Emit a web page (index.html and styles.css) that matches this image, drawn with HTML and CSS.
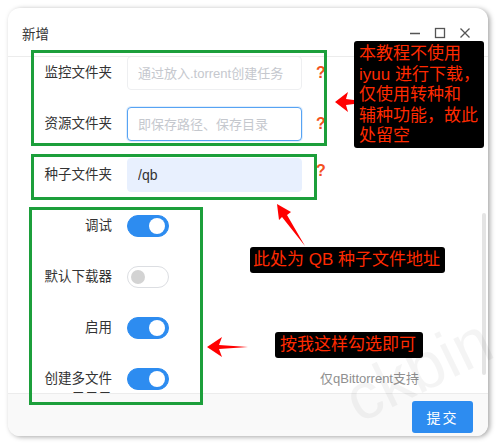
FILE: index.html
```html
<!doctype html>
<html lang="zh">
<head>
    <meta charset="UTF-8">
    <title>新增</title>
    <link rel="stylesheet" href="styles.css">
</head>
<body>
<div class="dialog">
    <div class="dlg-head">
        <span class="dlg-title">新增</span>
        <div class="win-ctrls">
            <svg width="12" height="12" viewBox="0 0 12 12"><path d="M1 6.5H11" stroke="#555" stroke-width="1.3"/></svg>
            <svg width="12" height="12" viewBox="0 0 12 12"><rect x="1.5" y="1.5" width="9" height="9" fill="none" stroke="#555" stroke-width="1.3"/></svg>
            <svg width="12" height="12" viewBox="0 0 12 12"><path d="M1.5 1.5L10.5 10.5M10.5 1.5L1.5 10.5" stroke="#555" stroke-width="1.3"/></svg>
        </div>
    </div>
    <div class="dlg-body">
        <div class="form">
            <div class="form-item">
                <label class="form-label">监控文件夹</label>
                <input class="ipt ipt-light" type="text" placeholder="通过放入.torrent创建任务">
                <span class="help">?</span>
            </div>
            <div class="form-item">
                <label class="form-label">资源文件夹</label>
                <input class="ipt ipt-focus" type="text" placeholder="即保存路径、保存目录">
                <span class="help">?</span>
            </div>
            <div class="form-item">
                <label class="form-label">种子文件夹</label>
                <input class="ipt ipt-fill" type="text" value="/qb">
                <span class="help help-up">?</span>
            </div>
            <div class="form-item">
                <label class="form-label">调试</label>
                <span class="switch on"><i></i></span>
            </div>
            <div class="form-item">
                <label class="form-label">默认下载器</label>
                <span class="switch"><i></i></span>
            </div>
            <div class="form-item">
                <label class="form-label">启用</label>
                <span class="switch on"><i></i></span>
            </div>
            <div class="form-item">
                <label class="form-label">创建多文件子目录</label>
                <span class="switch on"><i></i></span>
                <span class="hint">仅qBittorrent支持</span>
            </div>
        </div>
        <div class="scroll-thumb"></div>
    </div>
    <div class="dlg-foot">
        <button class="btn-primary">提交</button>
    </div>
</div>

<div class="notes">
    <div class="gbox gbox-1"></div>
    <div class="gbox gbox-2"></div>
    <div class="gbox gbox-3"></div>
    <div class="tip tip-1">本教程不使用<br>iyuu 进行下载，<br>仅使用转种和<br>辅种功能，故此<br>处留空</div>
    <div class="tip tip-2">此处为 QB 种子文件地址</div>
    <div class="tip tip-3">按我这样勾选即可</div>
    <svg class="arrows" width="500" height="445" viewBox="0 0 500 445">
        <polygon points="335,102 348,92 346,99 354,100 354,104 346,105 348,112" fill="#ff0000"/>
        <polygon points="277,204 291,212 287,215 305,246 282,217 279,220" fill="#ff0000"/>
        <polygon points="207,347 222,337 219,345 248,347 219,349 222,357" fill="#ff0000"/>
    </svg>
    <div class="watermark">ckbin</div>
</div>
</body>
</html>
```

FILE: styles.css
```css
*{
    margin: 0;
    padding: 0;
    box-sizing: border-box;
}
html,body{
    width: 100%;
    height: 100%;
    background: #fff;
    overflow: hidden;
}
body{
    font-family: "Liberation Sans", "Noto Sans CJK SC", sans-serif;
    color: #333;
}
.dialog{
    margin: 8px 0 0 8px;
    width: 480px;
    height: 428px;
    border-radius: 12px;
    background: #fff;
    box-shadow: 2px 1px 5px rgba(0,0,0,0.35);
    overflow: hidden;
    display: flex;
    flex-direction: column;
}
.dlg-head{
    height: 49px;
    flex-shrink: 0;
    display: flex;
    align-items: center;
    justify-content: space-between;
    padding: 0 17px 0 14px;
    border-bottom: 1px solid #ececec;
}
.dlg-title{
    font-size: 13.5px;
    color: #333;
    margin-top: 2px;
}
.win-ctrls{
    display: flex;
    gap: 13px;
    margin-top: 1px;
}
.dlg-body{
    position: relative;
    flex-grow: 1;
    overflow: hidden;
}
.form{
    margin-top: -1px;
    padding-left: 16px;
}
.form-item{
    display: flex;
    align-items: flex-start;
    height: 34px;
    margin-bottom: 17px;
}
.form-label{
    width: 103px;
    flex-shrink: 0;
    padding: 7px 15px 0 16px;
    font-size: 13.5px;
    line-height: 20px;
    text-align: right;
    color: #333;
}
.ipt{
    width: 175px;
    height: 34px;
    border: 1px solid #dcdee2;
    border-radius: 4px;
    padding: 0 10px;
    font-family: "Liberation Sans", "Noto Sans CJK SC", sans-serif;
    font-size: 13px;
    color: #333;
    background: #fff;
    outline: none;
}
.ipt::placeholder{
    color: #c5c8ce;
}
.ipt-light{
    border-color: #eeeff1;
}
.ipt-focus{
    border-color: #57a3f3;
    box-shadow: 0 0 0 1px rgba(45,140,240,0.15);
}
.ipt-fill{
    background: #e8f0fe;
    border-color: #e8f0fe;
    font-size: 14px;
}
.help{
    margin-left: 14px;
    font-size: 16px;
    font-weight: bold;
    line-height: 34px;
    color: #f4511e;
}
.help-up{
    line-height: 26px;
}
.switch{
    margin-top: 6px;
    width: 42px;
    height: 22px;
    border-radius: 11px;
    border: 1px solid #dcdee2;
    background: #fff;
    position: relative;
    flex-shrink: 0;
}
.switch i{
    position: absolute;
    left: 3px;
    top: 3px;
    width: 14px;
    height: 14px;
    border-radius: 50%;
    background: #d3d3d3;
}
.switch.on{
    background: #2d8cf0;
    border-color: #2d8cf0;
}
.switch.on i{
    left: auto;
    right: 3px;
    top: 2px;
    width: 16px;
    height: 16px;
    background: #fff;
}
.hint{
    margin-left: 151px;
    margin-top: 6px;
    font-size: 13px;
    color: #8f8f8f;
    white-space: nowrap;
}
.scroll-thumb{
    position: absolute;
    right: 2px;
    top: 156px;
    width: 4px;
    height: 162px;
    border-radius: 2px;
    background: #e4e4e4;
}
.dlg-foot{
    height: 43px;
    flex-shrink: 0;
    border-top: 1px solid #ececec;
    background: #f9f9f9;
    display: flex;
    justify-content: flex-end;
    align-items: flex-start;
    padding: 7px 15px 0 0;
}
.btn-primary{
    width: 61px;
    height: 32px;
    border: none;
    border-radius: 3px;
    background: #2d8cf0;
    color: #fff;
    font-family: "Liberation Sans", "Noto Sans CJK SC", sans-serif;
    font-size: 14px;
    letter-spacing: 2px;
}

/* annotations drawn over the screenshot */
.notes{
    position: absolute;
    left: 0;
    top: 0;
    width: 500px;
    height: 445px;
    pointer-events: none;
}
.gbox{
    position: absolute;
    border: 3px solid #1c9f3b;
}
.gbox-1{
    left: 31px;
    top: 50px;
    width: 296px;
    height: 96px;
}
.gbox-2{
    left: 31px;
    top: 154px;
    width: 286px;
    height: 46px;
}
.gbox-3{
    left: 29px;
    top: 207px;
    width: 174px;
    height: 198px;
}
.tip{
    position: absolute;
    background: #000;
    color: #ff2a00;
    border-radius: 3px;
    font-size: 17px;
    white-space: nowrap;
}
.tip-1{
    left: 354px;
    top: 41px;
    width: 130px;
    height: 107px;
    padding: 3px 0 0 5px;
    line-height: 20.5px;
}
.tip-2{
    left: 250px;
    top: 247px;
    width: 195px;
    height: 26px;
    line-height: 26px;
    padding-left: 3px;
}
.tip-3{
    left: 275px;
    top: 332px;
    width: 148px;
    height: 26px;
    line-height: 26px;
    padding-left: 5px;
}
.arrows{
    position: absolute;
    left: 0;
    top: 0;
}
.watermark{
    position: absolute;
    left: 362px;
    top: 370px;
    font-size: 66px;
    line-height: 60px;
    color: rgba(0,0,0,0.045);
    transform: rotate(-26deg);
    transform-origin: left bottom;
    font-family: "Liberation Sans", sans-serif;
}
```
